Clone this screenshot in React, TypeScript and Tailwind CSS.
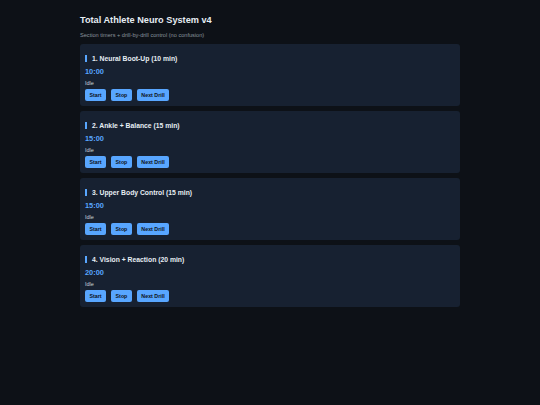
const sections = [
  { title: "1. Neural Boot-Up (10 min)", time: "10:00" },
  { title: "2. Ankle + Balance (15 min)", time: "15:00" },
  { title: "3. Upper Body Control (15 min)", time: "15:00" },
  { title: "4. Vision + Reaction (20 min)", time: "20:00" },
];

function Section({ title, time }: { title: string; time: string }) {
  return (
    <div className="rounded-[3px] bg-[#172131] px-[5px] pt-[11px] pb-[5px]">
      <h3 className="border-l-2 border-[#58a6ff] pl-[5px] text-[6.8px] font-bold leading-[7px] text-[#e6edf3]">
        {title}
      </h3>
      <div className="mt-[5px] text-[7.4px] font-bold leading-[9px] text-[#58a6ff]">{time}</div>
      <div className="mt-[3.5px] text-[5.5px] leading-[7px] text-[#c9d1d9]">Idle</div>
      <div className="mt-[2.5px] flex gap-[5px]">
        {["Start", "Stop", "Next Drill"].map((b) => (
          <button
            key={b}
            className="h-[12px] rounded-[2px] bg-[#58a6ff] px-[4.5px] text-[5.3px] font-bold leading-[12px] text-[#0d1117]"
          >
            {b}
          </button>
        ))}
      </div>
    </div>
  );
}

export default function App() {
  return (
    <div className="min-h-[405px] bg-[#0d1117] pt-[15px] font-['Liberation_Sans',Arial,sans-serif]">
      <div className="mx-auto w-[380px]">
        <h1 className="text-[9.2px] font-bold leading-[11px] text-[#e6edf3]">Total Athlete Neuro System v4</h1>
        <p className="mt-[5.5px] text-[5.6px] leading-[7px] text-[#8b949e]">
          Section timers + drill-by-drill control (no confusion)
        </p>
        <div className="mt-[5.5px] flex flex-col gap-[5px]">
          {sections.map((s) => (
            <Section key={s.title} {...s} />
          ))}
        </div>
      </div>
    </div>
  );
}
